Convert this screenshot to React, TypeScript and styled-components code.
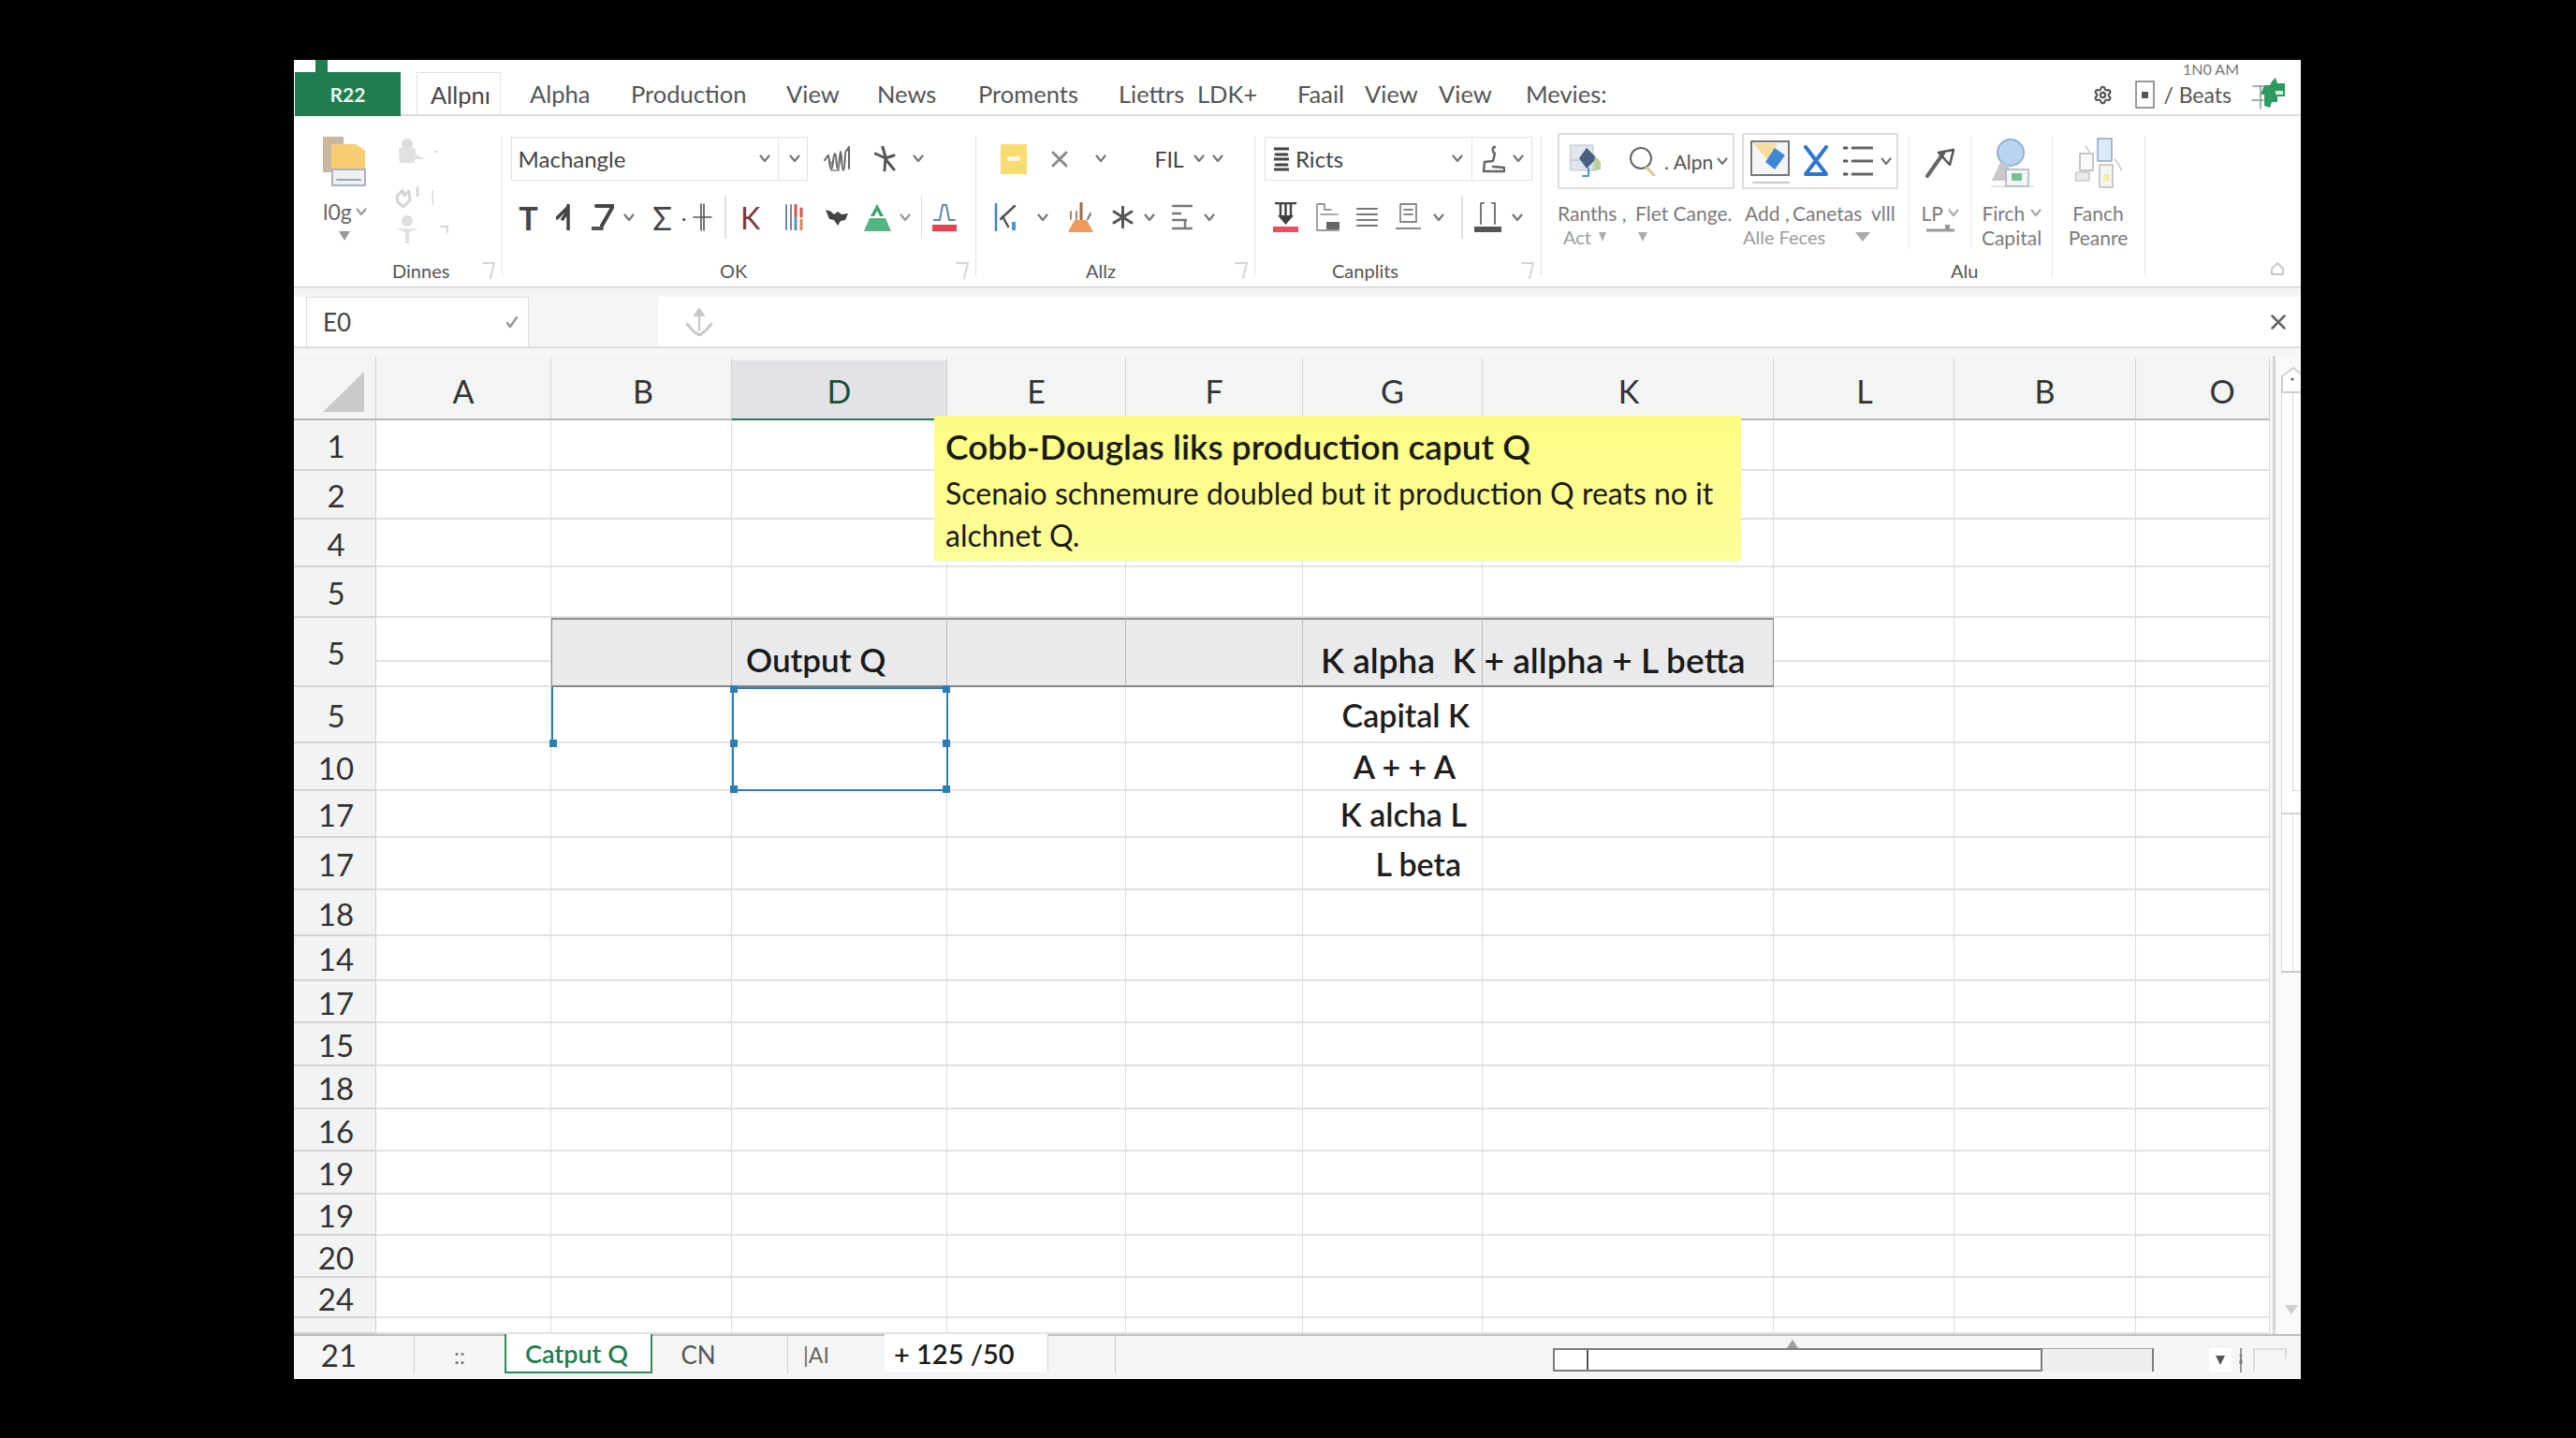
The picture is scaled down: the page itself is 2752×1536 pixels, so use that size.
import React from 'react'
import styled, { createGlobalStyle } from 'styled-components'
import { Settings } from 'lucide-react'

const GlobalStyle = createGlobalStyle`
  html, body { margin: 0; padding: 0; background: #000; }
  body { font-family: Lato, "Open Sans", "Liberation Sans", sans-serif; color: #333; }
`

const Page = styled.div`
  width: 2752px;
  height: 1536px;
  box-sizing: border-box;
  padding: 64px 294px 63px 314px;
  background: #000;
`

const Window = styled.div`
  height: 100%;
  display: flex;
  flex-direction: column;
  background: #fff;
  overflow: hidden;
`

/* ---------- top tab bar ---------- */

const TopBar = styled.div`
  flex: none;
  height: 60px;
  box-sizing: border-box;
  display: flex;
  align-items: flex-end;
  border-bottom: 2px solid #dcdcdc;
`

const FileTab = styled.div`
  position: relative;
  flex: none;
  width: 113px;
  height: 47px;
  margin-left: 1px;
  margin-bottom: -2px;
  display: flex;
  align-items: center;
  justify-content: center;
  background: #1f7d4f;
  color: #e8f3ec;
  font-size: 21px;
  font-weight: 700;

  &::before {
    content: '';
    position: absolute;
    left: 22px;
    top: -13px;
    width: 13px;
    height: 13px;
    background: #1f7d4f;
  }
`

const ActiveTab = styled.div`
  flex: none;
  width: 90px;
  height: 47px;
  box-sizing: border-box;
  margin-left: 17px;
  margin-right: 31px;
  margin-bottom: -2px;
  padding-left: 14px;
  display: flex;
  align-items: center;
  border: 1px solid #e2e2e2;
  border-bottom: 0;
  color: #444;
  font-size: 25.5px;
  overflow: hidden;
`

const Tab = styled.div<{ $w: number }>`
  flex: none;
  width: ${(p) => p.$w}px;
  height: 45px;
  display: flex;
  align-items: center;
  color: #555;
  font-size: 25.5px;
  white-space: nowrap;
`

const TopRight = styled.div`
  margin-left: auto;
  align-self: stretch;
  display: flex;
  flex-direction: column;
  align-items: flex-end;
`

const Clock = styled.div`
  height: 20px;
  line-height: 20px;
  margin-right: 66px;
  font-size: 16px;
  color: #777;
`

const TopActions = styled.div`
  height: 34px;
  display: flex;
  align-items: center;
  padding-right: 16px;
  color: #555;
  font-size: 24px;
`

/* ---------- ribbon ---------- */

const Ribbon = styled.div`
  flex: none;
  height: 183px;
  box-sizing: border-box;
  padding: 21px 0 11px;
  display: flex;
  border-bottom: 1px solid #c9c9c9;
`

const Group = styled.div<{ $w: number; $clear?: boolean }>`
  flex: none;
  width: ${(p) => p.$w}px;
  box-sizing: border-box;
  display: flex;
  flex-direction: column;
  border-right: ${(p) => (p.$clear ? '0' : '1.5px solid #e4e4e4')};
`

const ClipRow = styled.div`
  flex: none;
  height: 122px;
  display: flex;
`

const PasteColumn = styled.div`
  flex: none;
  width: 107px;
  box-sizing: border-box;
  padding-left: 31px;
  display: flex;
  flex-direction: column;
  align-items: flex-start;
`

const PasteLabel = styled.div`
  margin: 14px 0 0 0;
  height: 26px;
  display: flex;
  align-items: center;
  gap: 4px;
  color: #666;
  font-size: 23px;
`

const PasteDrop = styled.div`
  margin: 8px 0 0 17px;
  display: flex;
`

const FadedColumn = styled.div`
  flex: none;
  display: flex;
  flex-direction: column;
  align-items: flex-start;
`

const FadedSlot = styled.div<{ $mt: number }>`
  flex: none;
  display: flex;
  margin-top: ${(p) => p.$mt}px;
`

const ToolRow = styled.div<{ $mt: number; $h: number }>`
  flex: none;
  height: ${(p) => p.$h}px;
  margin-top: ${(p) => p.$mt}px;
  display: flex;
  align-items: center;
`

const Tool = styled.span<{ $x?: number; $w?: number; $c?: string; $fs?: number; $b?: boolean }>`
  flex: none;
  display: inline-flex;
  align-items: center;
  justify-content: center;
  margin-left: ${(p) => p.$x ?? 0}px;
  width: ${(p) => (p.$w ? `${p.$w}px` : 'auto')};
  color: ${(p) => p.$c ?? '#444'};
  font-size: ${(p) => p.$fs ?? 24}px;
  font-weight: ${(p) => (p.$b ? 700 : 400)};
  white-space: nowrap;
`

const ToolSep = styled.span<{ $x: number }>`
  flex: none;
  width: 1.5px;
  height: 46px;
  margin-left: ${(p) => p.$x}px;
  background: #dedede;
`

const Combo = styled.div<{ $x: number; $w: number }>`
  flex: none;
  width: ${(p) => p.$w}px;
  height: 47px;
  margin-left: ${(p) => p.$x}px;
  box-sizing: border-box;
  display: flex;
  align-items: center;
  border: 1.5px solid #dfdfdf;
  color: #444;
  font-size: 24px;
`

const ComboPart = styled.div<{ $w: number }>`
  flex: none;
  width: ${(p) => p.$w}px;
  height: 100%;
  display: flex;
  align-items: center;
  border-right: 1.5px solid #e4e4e4;
`

const CaptionRow = styled.div`
  margin-top: auto;
  height: 12px;
  line-height: 12px;
  display: flex;
  align-items: center;
`

const Caption = styled.span<{ $x: number }>`
  margin-left: ${(p) => p.$x}px;
  color: #555;
  font-size: 20px;
`

const Launcher = styled.span`
  margin-left: auto;
  margin-right: 7px;
  display: inline-flex;
`

const BigRow = styled.div`
  flex: none;
  height: 122px;
  display: flex;
`

const BoxColumn = styled.div<{ $w: number }>`
  flex: none;
  width: ${(p) => p.$w}px;
  box-sizing: border-box;
  padding-left: 17px;
  border-right: 1.5px solid #e8e8e8;
`

const BoxRow = styled.div`
  display: flex;
  gap: 8px;
  margin-top: -3px;
`

const Box = styled.div<{ $w: number }>`
  flex: none;
  width: ${(p) => p.$w}px;
  height: 60px;
  box-sizing: border-box;
  display: flex;
  align-items: center;
  border: 2px solid #dcdcdc;
  border-radius: 2px;
`

const LabelLine = styled.div<{ $mt?: number }>`
  height: 26px;
  margin-top: ${(p) => p.$mt ?? 0}px;
  display: flex;
  align-items: center;
  color: #7b7b7b;
  font-size: 21px;
  white-space: nowrap;
`

const LabelText = styled.span<{ $w?: number; $x?: number; $soft?: boolean }>`
  flex: none;
  width: ${(p) => (p.$w ? `${p.$w}px` : 'auto')};
  margin-left: ${(p) => p.$x ?? 0}px;
  color: ${(p) => (p.$soft ? '#9b9b9b' : '#7b7b7b')};
  font-size: ${(p) => (p.$soft ? 20 : 21)}px;
`

const BigColumn = styled.div<{ $w: number; $clear?: boolean }>`
  flex: none;
  width: ${(p) => p.$w}px;
  box-sizing: border-box;
  display: flex;
  flex-direction: column;
  align-items: center;
  border-right: ${(p) => (p.$clear ? '0' : '1.5px solid #e8e8e8')};
`

const BigIcon = styled.div`
  height: 57px;
  display: flex;
  align-items: center;
  justify-content: center;
`

const Collapse = styled.div`
  flex: 1;
  display: flex;
  align-items: flex-end;
  justify-content: flex-end;
  padding: 0 17px 0 0;
`

/* ---------- formula bar ---------- */

const FormulaGap = styled.div`
  flex: none;
  height: 10px;
  background: linear-gradient(#f0f0f0, #f7f7f7);
`

const FormulaBar = styled.div`
  flex: none;
  height: 55px;
  box-sizing: border-box;
  padding-left: 13px;
  display: flex;
  align-items: stretch;
  border-bottom: 2px solid #dcdcdc;
`

const NameBox = styled.div`
  flex: none;
  width: 238px;
  box-sizing: border-box;
  padding: 0 10px 0 17px;
  display: flex;
  align-items: center;
  justify-content: space-between;
  border: 1.5px solid #dcdcdc;
  border-bottom-width: 0;
  color: #444;
  font-size: 26px;
`

const FormulaFill = styled.div`
  flex: none;
  width: 138px;
  background: #f5f5f5;
`

const FormulaIcon = styled.div`
  flex: none;
  margin-left: 30px;
  display: flex;
  align-items: center;
`

const FormulaClose = styled.div`
  margin-left: auto;
  padding-right: 16px;
  display: flex;
  align-items: center;
`

/* ---------- sheet ---------- */

const SheetArea = styled.div`
  flex: none;
  height: 1053px;
  box-sizing: border-box;
  padding-top: 8px;
  display: flex;
  background: #f6f6f6;
`

const SheetWrap = styled.div`
  position: relative;
  flex: none;
  width: 2111px;
`

const Grid = styled.div<{ $rows: string }>`
  display: grid;
  grid-template-columns: 88px 187px 193px 230px 191px 189px 192px 311px 193px 194px 143px;
  grid-template-rows: ${(p) => p.$rows};
  background: #fff;
`

const Corner = styled.div`
  display: flex;
  align-items: flex-end;
  justify-content: flex-end;
  padding: 0 12px 7px 0;
  background: #f3f4f4;
  border-right: 1px solid #d2d2d2;
  border-bottom: 2px solid #b8b8b8;
`

const ColHead = styled.div<{ $on?: boolean; $nudge?: number }>`
  display: flex;
  align-items: center;
  justify-content: center;
  box-sizing: border-box;
  padding: 3px 0 0 ${(p) => p.$nudge ?? 0}px;
  font-size: 34px;
  background: ${(p) => (p.$on ? '#e1e3e6' : '#f3f4f4')};
  border-top: 5px solid #f3f4f4;
  border-right: 1px solid #d2d2d2;
  border-bottom: ${(p) => (p.$on ? '2px solid #1f7d4f' : '2px solid #b8b8b8')};
  color: ${(p) => (p.$on ? '#1c4f38' : '#333')};
`

const RowHead = styled.div<{ $span?: boolean }>`
  grid-row: ${(p) => (p.$span ? 'span 2' : 'auto')};
  display: flex;
  align-items: center;
  justify-content: center;
  box-sizing: border-box;
  padding: 2px 0 0 3px;
  overflow: hidden;
  font-size: 33px;
  color: #333;
  background: #f2f3f3;
  border-right: 1.5px solid #cfcfcf;
  border-bottom: 2px solid #d4d4d4;
`

const Cell = styled.div<{ $pad?: number }>`
  display: flex;
  align-items: center;
  justify-content: flex-end;
  box-sizing: border-box;
  min-width: 0;
  padding-right: ${(p) => p.$pad ?? 0}px;
  border-right: 1px solid #dcdcdc;
  border-bottom: 2px solid #e2e2e2;
  font-size: 34px;
  font-weight: 600;
  color: #1e1e1e;
  white-space: nowrap;
`

const BandCell = styled.div<{ $first?: boolean; $last?: boolean; $left?: number; $over?: boolean }>`
  grid-row: span 2;
  position: ${(p) => (p.$over ? 'relative' : 'static')};
  z-index: ${(p) => (p.$over ? 1 : 'auto')};
  display: flex;
  align-items: center;
  box-sizing: border-box;
  min-width: 0;
  padding-left: ${(p) => p.$left ?? 0}px;
  padding-top: 14px;
  background: #e9eaeb;
  border-top: 2px solid #8e8e8e;
  border-bottom: 2px solid #858585;
  border-left: ${(p) => (p.$first ? '1.5px solid #8e8e8e' : '0')};
  border-right: ${(p) => (p.$last ? '1.5px solid #8e8e8e' : '1px solid #bdbdbd')};
  font-size: ${(p) => (p.$over ? 37 : 35)}px;
  font-weight: 600;
  color: #1a1a1a;
  white-space: nowrap;
`

const Note = styled.div`
  position: absolute;
  left: 684px;
  top: 64px;
  width: 862px;
  height: 155px;
  box-sizing: border-box;
  padding: 13px 12px 0;
  background: linear-gradient(#fdfd84, #fdfd9a);
  color: #1a1a10;
`

const NoteTitle = styled.div`
  height: 40px;
  line-height: 40px;
  font-size: 37px;
  font-weight: 600;
  white-space: nowrap;
`

const NoteBody = styled.div`
  margin-top: 7px;
  font-size: 32px;
  line-height: 45px;
  white-space: nowrap;
`

const Selection = styled.div<{ $l: number; $w: number; $h: number; $open?: boolean }>`
  position: absolute;
  left: ${(p) => p.$l}px;
  top: 354px;
  width: ${(p) => p.$w}px;
  height: ${(p) => p.$h}px;
  box-sizing: border-box;
  border: ${(p) => (p.$open ? '0' : '2px solid #2d7db5')};
  border-left: 2px solid #2d7db5;
`

const Handle = styled.span<{ $x: number; $y: number }>`
  position: absolute;
  left: ${(p) => p.$x}%;
  top: ${(p) => p.$y}%;
  width: 8px;
  height: 8px;
  transform: translate(-50%, -50%);
  background: #2d7db5;
`

const VScroll = styled.div`
  flex: 1;
  display: flex;
  flex-direction: column;
  padding: 12px 0 0 6px;
  border-left: 3px solid #d6d6d6;
  margin-left: 3px;
  background: #f9f9f9;
`

const ScrollCap = styled.div`
  flex: none;
  height: 28px;
  display: flex;
`

const ScrollThumb = styled.div`
  flex: none;
  height: 450px;
  box-sizing: border-box;
  border-left: 1.5px solid #d6d6d6;
  border-bottom: 2px solid #d4d4d4;
  padding-left: 11px;
  background: #fff;
`

const ScrollInner = styled.div`
  height: 425px;
  box-sizing: border-box;
  border-left: 1.5px solid #d6d6d6;
  border-bottom: 1.5px solid #d6d6d6;
`

const ScrollLower = styled.div`
  flex: none;
  height: 169px;
  box-sizing: border-box;
  padding-left: 11px;
  border-left: 1.5px solid #d6d6d6;
  border-bottom: 2px solid #c8c8c8;
  background: #fff;
`

const ScrollRail = styled.div`
  height: 100%;
  border-left: 1.5px solid #dcdcdc;
`

const ScrollEnd = styled.div`
  margin-top: 355px;
  padding-left: 4px;
  display: flex;
`

/* ---------- bottom sheet tabs ---------- */

const SheetBar = styled.div`
  flex: 1;
  display: flex;
  align-items: flex-start;
  box-sizing: border-box;
  border-top: 2px solid #bdbdbd;
  background: #f5f5f5;
  color: #555;
`

const BarItem = styled.div<{ $x?: number; $w: number; $sep?: boolean; $end?: number }>`
  flex: none;
  width: ${(p) => p.$w}px;
  height: 40px;
  box-sizing: border-box;
  padding-right: ${(p) => p.$end ?? 0}px;
  margin-left: ${(p) => p.$x ?? 0}px;
  display: flex;
  align-items: center;
  justify-content: center;
  font-size: 26px;
  border-right: ${(p) => (p.$sep ? '1.5px solid #cfcfcf' : '0')};
`

const SheetTabOn = styled.div`
  flex: none;
  width: 158px;
  height: 42px;
  box-sizing: border-box;
  display: flex;
  align-items: center;
  justify-content: center;
  padding-right: 4px;
  background: #fff;
  border: 2px solid #2b8a5e;
  border-top: 0;
  color: #1f7d4f;
  font-size: 27px;
  font-weight: 600;
  margin-top: -2px;
`

const AddTab = styled.div`
  flex: none;
  width: 175px;
  height: 40px;
  margin-top: -2px;
  margin-left: 53px;
  box-sizing: border-box;
  padding-left: 10px;
  display: flex;
  align-items: center;
  background: #fff;
  border-right: 1.5px solid #d6d6d6;
  color: #1c1c1c;
  font-size: 29px;
  font-weight: 600;
`

const HScroll = styled.div`
  position: relative;
  flex: none;
  width: 523px;
  height: 25px;
  margin: 13px 0 0 467px;
  box-sizing: border-box;
  display: flex;
  border: 2px solid #7d7d7d;
  background: #fff;
`

const HScrollCap = styled.div`
  width: 34px;
  border-right: 2px solid #555;
`

const HCaret = styled.span`
  position: absolute;
  left: 248px;
  top: -11px;
  width: 0;
  height: 0;
  border-left: 6px solid transparent;
  border-right: 6px solid transparent;
  border-bottom: 9px solid #9d9d9d;
`

const HTrack = styled.div`
  flex: none;
  width: 119px;
  height: 25px;
  margin-top: 13px;
  box-sizing: border-box;
  background: #eeeeee;
  border-top: 1.5px solid #a8a8a8;
  border-right: 2px solid #7f7f7f;
`

const DropBtn = styled.div`
  flex: none;
  width: 24px;
  height: 25px;
  margin: 13px 0 0 59px;
  display: flex;
  align-items: center;
  justify-content: center;
  background: #fff;
`

const Tail = styled.div`
  flex: none;
  margin: 13px 0 0 8px;
  display: flex;
`

/* ---------- icons ---------- */

const Ico: React.FC<{ w: number; h: number; children: React.ReactNode }> = ({ w, h, children }) => (
  <svg width={w} height={h} viewBox={`0 0 ${w} ${h}`} fill='none' strokeLinecap='round' strokeLinejoin='round'>
    {children}
  </svg>
)

const Chev: React.FC<{ c?: string }> = ({ c = '#777' }) => (
  <Ico w={12} h={9}>
    <path d='M1.5 1.5 6 7l4.5-5.5' stroke={c} strokeWidth='2.2' />
  </Ico>
)

const Tri: React.FC<{ c?: string; w?: number }> = ({ c = '#999', w = 12 }) => (
  <Ico w={w} h={10}>
    <path d={`M0 0h${w}L${w / 2} 10z`} fill={c} />
  </Ico>
)

const PasteIcon = () => (
  <Ico w={46} h={54}>
    <path d='M0 1h22v38H0z' fill='#c9b7a0' />
    <path d='M9 9h26l10 7v21H9z' fill='#f7cd72' />
    <path d='M10 36h35v17H10z' fill='#eef0f3' stroke='#a9b2bd' strokeWidth='2' />
    <path d='M15 47h25' stroke='#9aa4af' strokeWidth='2' />
  </Ico>
)

const Faded1 = () => (
  <Ico w={48} h={26}>
    <circle cx='14' cy='6' r='6' fill='#dcdcdc' />
    <path d='M5 10h17l2 8 10 4-11 0-2 4H6z' fill='#e0e0e0' />
    <circle cx='45' cy='14' r='1.5' fill='#d8d8d8' />
  </Ico>
)

const Faded2 = () => (
  <Ico w={42} h={24}>
    <path d='M3 12 9 5l2 6 5-5 1 10-7 7-6-5z' stroke='#d6d6d6' strokeWidth='3' />
    <path d='M25 2v9M42 6v14' stroke='#d2d2d2' strokeWidth='2.5' />
  </Ico>
)

const Faded3 = () => (
  <Ico w={62} h={30}>
    <circle cx='14' cy='6' r='6' fill='#dedede' />
    <path d='M2 14h24l-10 4v12h-4V18z' fill='#e0e0e0' />
    <path d='M50 12h7M57 12v6' stroke='#d6d6d6' strokeWidth='2' />
  </Ico>
)

const ChartIcon = () => (
  <Ico w={31} h={27}>
    <path d='M1 15c2-2 3-5 4-5s1 15 3 15 2-17 4-17 1 16 3 16 2-18 3-18 1 20 3 20 1-20 3-21 2-3 3-4v23' stroke='#666' strokeWidth='2' />
    <path d='M8 17v9h8v-9' stroke='#888' strokeWidth='1.5' />
  </Ico>
)

const RunnerIcon = () => (
  <Ico w={23} h={28}>
    <path d='M9 1l3 11-1 14M1 8l11 5 9-3M12 14l9 11' stroke='#555' strokeWidth='3' />
  </Ico>
)

const FlagIcon = () => (
  <Ico w={16} h={28}>
    <path d='M13 1v26M13 3 1 15M13 7l-6 9' stroke='#444' strokeWidth='3.5' />
  </Ico>
)

const SlantIcon = () => (
  <Ico w={24} h={28}>
    <path d='M5 2h18l-12 21' stroke='#444' strokeWidth='4' />
    <path d='M1 26h10' stroke='#555' strokeWidth='4' />
  </Ico>
)

const PlusIcon = () => (
  <Ico w={21} h={30}>
    <path d='M9 1v28M12 1v28M1 15h19' stroke='#555' strokeWidth='1.6' />
  </Ico>
)

const BarsIcon = () => (
  <Ico w={21} h={28}>
    <path d='M2 1v26M7 1v26' stroke='#6f86a6' strokeWidth='2' />
    <path d='M12 1v12' stroke='#d9534f' strokeWidth='3' />
    <path d='M12 15v12' stroke='#5e8fc0' strokeWidth='3' />
    <path d='M18 5v8' stroke='#d9534f' strokeWidth='3' />
    <path d='M18 17v10' stroke='#d98a4f' strokeWidth='3' />
  </Ico>
)

const BatIcon = () => (
  <Ico w={24} h={20}>
    <path d='M0 2l6 2 3 3 4-3 4 3 7-1-3 7-5 1-3 5-4-6-5-1z' fill='#444' />
  </Ico>
)

const FillGreen = () => (
  <Ico w={29} h={30}>
    <path d='M14 1 7 14h4l3-6 3 6h4z' fill='#3aa26b' />
    <path d='M6 16h17l6 14H0z' fill='#53b583' />
  </Ico>
)

const RedUnder = () => (
  <Ico w={26} h={30}>
    <path d='M2 18h6l3-16h4l3 16h6' stroke='#5c83b8' strokeWidth='2' />
    <path d='M0 23h26v7H0z' fill='#e4434f' />
  </Ico>
)

const NoteIcon = () => (
  <Ico w={28} h={32}>
    <path d='M0 0h28v32H0z' fill='#f8dc72' />
    <path d='M7 13h14v5H7z' fill='#fff8dd' />
  </Ico>
)

const CrossIcon = () => (
  <Ico w={18} h={18}>
    <path d='M2 2l14 14M16 2 2 16' stroke='#8a8a8a' strokeWidth='3' />
  </Ico>
)

const BlueK = () => (
  <Ico w={25} h={30}>
    <path d='M2 1v28' stroke='#3f86c9' strokeWidth='2.5' />
    <path d='M7 17 22 3M9 14l6 11' stroke='#555' strokeWidth='2.5' />
    <path d='M19 20h4v9h-4z' fill='#4b96d6' />
  </Ico>
)

const OrangeIcon = () => (
  <Ico w={27} h={32}>
    <path d='M3 10v8M9 10v8' stroke='#9a8a7a' strokeWidth='2' />
    <path d='M14 1v17' stroke='#a06a45' strokeWidth='3' />
    <path d='M24 12l-3 6' stroke='#777' strokeWidth='2' />
    <path d='M7 19h13l7 13H0z' fill='#ef9a5e' />
  </Ico>
)

const StarIcon = () => (
  <Ico w={23} h={24}>
    <path d='M11.5 1v22M2 6l19 12M21 6 2 18' stroke='#555' strokeWidth='3' />
  </Ico>
)

const AlignIcon = () => (
  <Ico w={22} h={28}>
    <path d='M1 2h20M1 10h8M1 17h14M14 17v8M1 26h20' stroke='#777' strokeWidth='2.5' />
  </Ico>
)

const StackIcon = () => (
  <Ico w={16} h={28}>
    <path d='M0 3h16M2 9h12M0 14h16M2 20h12M0 25h16' stroke='#444' strokeWidth='3' />
  </Ico>
)

const JoyIcon = () => (
  <Ico w={26} h={30}>
    <path d='M15 2c-3 0-3 5 0 7l-2 8-9 1-1 10h22v-4l-12-1' stroke='#666' strokeWidth='2.5' />
  </Ico>
)

const DownRed = () => (
  <Ico w={27} h={32}>
    <path d='M8 1v14M13.5 1v14M19 1v14M3 1h21' stroke='#444' strokeWidth='2.5' />
    <path d='M5 14h17l-8.5 10z' fill='#3f3f3f' />
    <path d='M0 26h27v6H0z' fill='#e8505f' />
  </Ico>
)

const FileIcon = () => (
  <Ico w={27} h={30}>
    <path d='M2 1h8v6h7M2 1v28h23' stroke='#999' strokeWidth='1.8' />
    <path d='M6 12h18' stroke='#aaa' strokeWidth='1.8' />
    <path d='M12 20h14v8H12z' fill='#666' />
  </Ico>
)

const LinesIcon = () => (
  <Ico w={23} h={22}>
    <path d='M1 2h21M1 8h21M1 14h21M1 20h21' stroke='#777' strokeWidth='2.2' />
  </Ico>
)

const DocIcon = () => (
  <Ico w={27} h={30}>
    <path d='M5 1h17v19H5z' stroke='#888' strokeWidth='1.8' />
    <path d='M9 7h9M9 12h9' stroke='#888' strokeWidth='1.8' />
    <path d='M0 27h27' stroke='#888' strokeWidth='2.2' />
  </Ico>
)

const BorderIcon = () => (
  <Ico w={29} h={32}>
    <path d='M7 1v22M22 1v22M7 1h3M22 1h-3' stroke='#777' strokeWidth='2' />
    <path d='M0 26h29v6H0z' fill='#555' />
  </Ico>
)

const DiamondIcon = () => (
  <Ico w={34} h={36}>
    <path d='M1 1h24v27H1z' fill='#dfe6ec' stroke='#b9c4cf' />
    <path d='M1 17h24' stroke='#aab6c2' />
    <path d='M18 4l11 11-11 11-8-11z' fill='#4b5f7e' />
    <path d='M27 12l6 7v8l-8 2z' fill='#b9cf9c' />
    <path d='M20 26v8h-6' stroke='#4b96d6' strokeWidth='2' />
  </Ico>
)

const SearchIcon = () => (
  <Ico w={30} h={32}>
    <circle cx='13' cy='13' r='11' stroke='#666' strokeWidth='2' />
    <path d='M19 23l8 8' stroke='#d7c98d' strokeWidth='3' />
  </Ico>
)

const PicIcon = () => (
  <Ico w={42} h={54}>
    <path d='M1 6h40v36H1z' fill='#f3f5f7' stroke='#777' strokeWidth='2' />
    <path d='M3 8h26L18 26z' fill='#f7dc9e' />
    <path d='M26 13l11 8-11 15-10-8z' fill='#3f86d6' />
    <path d='M3 50h38' stroke='#c8c8c8' strokeWidth='2' />
  </Ico>
)

const HourIcon = () => (
  <Ico w={32} h={34}>
    <path d='M5 2 27 31H5L27 2' stroke='#2e77cc' strokeWidth='4' />
  </Ico>
)

const ListIcon = () => (
  <Ico w={32} h={32}>
    <path d='M10 2h22M10 16h22M10 30h22' stroke='#666' strokeWidth='3' />
    <path d='M1 2h3M1 16h3M1 30h3' stroke='#555' strokeWidth='3' />
  </Ico>
)

const ArrowIcon = () => (
  <Ico w={32} h={32}>
    <path d='M2 30 19 6' stroke='#666' strokeWidth='4' />
    <path d='M14 5l16-3-4 16z' stroke='#555' strokeWidth='2.5' />
  </Ico>
)

const FichIcon = () => (
  <Ico w={48} h={54}>
    <circle cx='23' cy='16' r='14' fill='#b9d4f0' stroke='#8fb1d6' strokeWidth='2' />
    <path d='M12 26 3 46h15l4-16z' fill='#c9c9c9' />
    <path d='M3 52h44' stroke='#e4e4e4' strokeWidth='2' />
    <path d='M18 34h24v18H18z' fill='#f3f5f6' stroke='#a8b2bb' strokeWidth='1.5' />
    <path d='M24 38h11v8H24z' fill='#73c28f' />
  </Ico>
)

const FanchIcon = () => (
  <Ico w={50} h={56}>
    <path d='M5 18h14v18H5z' fill='#fafafa' stroke='#b5b5b5' strokeWidth='1.5' />
    <path d='M24 2h15v24H24z' fill='#dbe9f6' stroke='#93a8bf' strokeWidth='1.5' />
    <path d='M1 38h14v9H1z' fill='#ececec' stroke='#b5b5b5' />
    <path d='M26 30h14v24H26z' fill='#f5f5f5' stroke='#bbb' strokeWidth='1.5' />
    <path d='M30 40h7v7h-7z' fill='#f4eea8' />
    <path d='M42 24c3 3 6 8 7 12M11 10l4 6' stroke='#c9c9c9' strokeWidth='1.5' />
  </Ico>
)

const SmallBar = () => (
  <Ico w={30} h={10}>
    <path d='M0 6h30' stroke='#999' strokeWidth='3' />
    <path d='M20 0h5v5h-5z' fill='#999' />
  </Ico>
)

const Corner3 = () => (
  <Ico w={14} h={18}>
    <path d='M1 1h12L9 17' stroke='#d4d4d4' strokeWidth='2' />
  </Ico>
)

const PuzzleIcon = () => (
  <Ico w={37} h={36}>
    <path d='M14 8h6l2-4 4-4 2 6h8v14h-8v6h-6l-2 6-6-2V18h-4z' fill='#2f9a5f' />
    <path d='M10 9v24M1 24h12M2 9h12' stroke='#7c9c8a' strokeWidth='1.5' />
    <path d='M26 14h8v4h-8z' fill='#e0f0e6' />
  </Ico>
)

const WinIcon = () => (
  <Ico w={21} h={30}>
    <path d='M1 1h19v28H1z' stroke='#777' strokeWidth='1.5' />
    <path d='M7 12h7v7H7z' fill='#555' />
  </Ico>
)

const AnchorIcon = () => (
  <Ico w={28} h={30}>
    <path d='M14 1l-5 7h10zM14 8v16' fill='#c8c8c8' stroke='#c8c8c8' strokeWidth='2' />
    <path d='M1 17l6 7M27 17l-6 7M8 25l6 4 6-4' stroke='#c8c8c8' strokeWidth='3' />
  </Ico>
)

const CheckIcon = () => (
  <Ico w={14} h={14}>
    <path d='M2 8l3 4 7-10' stroke='#999' strokeWidth='2.5' />
  </Ico>
)

const CloseIcon = () => (
  <Ico w={16} h={16}>
    <path d='M1.5 1.5l13 13M14.5 1.5l-13 13' stroke='#666' strokeWidth='2.5' />
  </Ico>
)

const CornerMark = () => (
  <Ico w={44} h={43}>
    <path d='M44 0v43H0z' fill='#c9cacb' />
  </Ico>
)

const CapIcon = () => (
  <Ico w={26} h={28}>
    <path d='M1 27V10L13 1l12 9v17z' fill='#fff' stroke='#cfcfcf' strokeWidth='2' />
    <circle cx='12' cy='13' r='1.5' fill='#555' />
  </Ico>
)

const TailIcon = () => (
  <Ico w={52} h={26}>
    <path d='M2 0v26M1 8h2M2 10l-1 6h2z' stroke='#777' strokeWidth='1.5' />
    <path d='M16 24V1h34v10' stroke='#d4d4d4' strokeWidth='1.5' />
  </Ico>
)

/* ---------- data ---------- */

const columns: [string, number][] = [
  ['A', 0],
  ['B', 4],
  ['D', 0],
  ['E', 0],
  ['F', 0],
  ['G', 0],
  ['K', 2],
  ['L', 2],
  ['B', 0],
  ['O', 42],
]

const rows: { label: string; h: number }[] = [
  { label: '1', h: 54 },
  { label: '2', h: 52 },
  { label: '4', h: 51 },
  { label: '5', h: 54 },
  { label: '5', h: 60 },
  { label: '10', h: 51 },
  { label: '17', h: 50 },
  { label: '17', h: 56 },
  { label: '18', h: 49 },
  { label: '14', h: 48 },
  { label: '17', h: 45 },
  { label: '15', h: 46 },
  { label: '18', h: 46 },
  { label: '16', h: 45 },
  { label: '19', h: 46 },
  { label: '19', h: 44 },
  { label: '20', h: 45 },
  { label: '24', h: 43 },
  { label: '', h: 17 },
]

const gridRows = [
  69,
  ...rows.slice(0, 4).map((r) => r.h),
  47,
  27,
  ...rows.slice(4).map((r) => r.h),
]
  .map((h) => `${h}px`)
  .join(' ')

// right aligned text in column G, keyed by index into the rows below the band
const variables: Record<number, { text: string; pad: number }> = {
  0: { text: 'Capital K', pad: 13 },
  1: { text: 'A + + A', pad: 28 },
  2: { text: 'K alcha L', pad: 16 },
  3: { text: 'L beta', pad: 22 },
}

const tabs: [string, number][] = [
  ['Alpha', 108],
  ['Production', 166],
  ['View', 97],
  ['News', 108],
  ['Proments', 150],
  ['Liettrs', 84],
  ['LDK+', 107],
  ['Faail', 72],
  ['View', 79],
  ['View', 93],
  ['Mevies:', 100],
]

const Sheet: React.FC = () => (
  <Grid $rows={gridRows}>
    <Corner>
      <CornerMark />
    </Corner>
    {columns.map(([c, nudge], i) => (
      <ColHead key={i} $on={i === 2} $nudge={nudge}>
        {c}
      </ColHead>
    ))}
    {rows.slice(0, 4).map((r, i) => (
      <React.Fragment key={i}>
        <RowHead>{r.label}</RowHead>
        {columns.map((_, j) => (
          <Cell key={j} />
        ))}
      </React.Fragment>
    ))}
    <RowHead $span>5</RowHead>
    <Cell />
    <BandCell $first />
    <BandCell $left={15}>Output Q</BandCell>
    <BandCell />
    <BandCell />
    <BandCell $left={19} $over>
      K alpha&nbsp; K + allpha + L betta
    </BandCell>
    <BandCell $last />
    <Cell />
    <Cell />
    <Cell />
    <Cell />
    <Cell />
    <Cell />
    <Cell />
    {rows.slice(4).map((r, i) => (
      <React.Fragment key={i}>
        <RowHead>{r.label}</RowHead>
        {columns.map((_, j) =>
          j === 5 && variables[i] ? (
            <Cell key={j} $pad={variables[i].pad}>
              {variables[i].text}
            </Cell>
          ) : (
            <Cell key={j} />
          ),
        )}
      </React.Fragment>
    ))}
  </Grid>
)

const App: React.FC = () => (
  <Page>
    <GlobalStyle />
    <Window>
      <TopBar>
        <FileTab>R22</FileTab>
        <ActiveTab>Allpnı</ActiveTab>
        {tabs.map(([name, w], i) => (
          <Tab key={i} $w={w}>
            {name}
          </Tab>
        ))}
        <TopRight>
          <Clock>1N0 AM</Clock>
          <TopActions>
            <Settings size={21} strokeWidth={2.4} color='#555' />
            <Tool $x={24}>
              <WinIcon />
            </Tool>
            <Tool $x={9} $c='#555' $fs={23}>
              / Beats
            </Tool>
            <Tool $x={21}>
              <PuzzleIcon />
            </Tool>
          </TopActions>
        </TopRight>
      </TopBar>

      <Ribbon>
        <Group $w={223}>
          <ClipRow>
            <PasteColumn>
              <PasteIcon />
              <PasteLabel>
                l0g
                <Chev c='#999' />
              </PasteLabel>
              <PasteDrop>
                <Tri />
              </PasteDrop>
            </PasteColumn>
            <FadedColumn>
              <FadedSlot $mt={3}>
                <Faded1 />
              </FadedSlot>
              <FadedSlot $mt={24}>
                <Faded2 />
              </FadedSlot>
              <FadedSlot $mt={8}>
                <Faded3 />
              </FadedSlot>
            </FadedColumn>
          </ClipRow>
          <CaptionRow>
            <Caption $x={105}>Dinnes</Caption>
            <Launcher>
              <Corner3 />
            </Launcher>
          </CaptionRow>
        </Group>

        <Group $w={506}>
          <ToolRow $mt={1} $h={47}>
            <Combo $x={9} $w={317}>
              <ComboPart $w={284}>
                <Tool $x={8} $w={112}>
                  Machangle
                </Tool>
                <Tool $x={144} $w={12}>
                  <Chev />
                </Tool>
              </ComboPart>
              <Tool $x={11} $w={12}>
                <Chev />
              </Tool>
            </Combo>
            <Tool $x={17}>
              <ChartIcon />
            </Tool>
            <Tool $x={23}>
              <RunnerIcon />
            </Tool>
            <Tool $x={18}>
              <Chev />
            </Tool>
          </ToolRow>
          <ToolRow $mt={16} $h={46}>
            <Tool $x={18} $w={19} $fs={34} $b>
              T
            </Tool>
            <Tool $x={20} $w={16}>
              <FlagIcon />
            </Tool>
            <Tool $x={22} $w={24}>
              <SlantIcon />
            </Tool>
            <Tool $x={10} $w={12}>
              <Chev />
            </Tool>
            <Tool $x={18} $w={23} $fs={34}>
              Σ
            </Tool>
            <Tool $x={10} $w={3} $fs={20}>
              ·
            </Tool>
            <Tool $x={8} $w={21}>
              <PlusIcon />
            </Tool>
            <ToolSep $x={13} />
            <Tool $x={15} $w={22} $fs={32} $c='#7d3b3b'>
              K
            </Tool>
            <Tool $x={25} $w={21}>
              <BarsIcon />
            </Tool>
            <Tool $x={23} $w={24}>
              <BatIcon />
            </Tool>
            <Tool $x={17} $w={29}>
              <FillGreen />
            </Tool>
            <Tool $x={9} $w={12}>
              <Chev c='#999' />
            </Tool>
            <ToolSep $x={11} />
            <Tool $x={11} $w={26}>
              <RedUnder />
            </Tool>
          </ToolRow>
          <CaptionRow>
            <Caption $x={232}>OK</Caption>
            <Launcher>
              <Corner3 />
            </Launcher>
          </CaptionRow>
        </Group>

        <Group $w={298}>
          <ToolRow $mt={1} $h={47}>
            <Tool $x={26} $w={28}>
              <NoteIcon />
            </Tool>
            <Tool $x={26} $w={18}>
              <CrossIcon />
            </Tool>
            <Tool $x={29} $w={12}>
              <Chev />
            </Tool>
            <Tool $x={53} $w={28} $fs={23}>
              FIL
            </Tool>
            <Tool $x={12} $w={12}>
              <Chev />
            </Tool>
            <Tool $x={8} $w={12}>
              <Chev />
            </Tool>
          </ToolRow>
          <ToolRow $mt={16} $h={46}>
            <Tool $x={19} $w={25}>
              <BlueK />
            </Tool>
            <Tool $x={21} $w={12}>
              <Chev />
            </Tool>
            <Tool $x={21} $w={27}>
              <OrangeIcon />
            </Tool>
            <Tool $x={20} $w={23}>
              <StarIcon />
            </Tool>
            <Tool $x={11} $w={12}>
              <Chev />
            </Tool>
            <Tool $x={18} $w={22}>
              <AlignIcon />
            </Tool>
            <Tool $x={12} $w={12}>
              <Chev />
            </Tool>
          </ToolRow>
          <CaptionRow>
            <Caption $x={117}>Allz</Caption>
            <Launcher>
              <Corner3 />
            </Launcher>
          </CaptionRow>
        </Group>

        <Group $w={306}>
          <ToolRow $mt={1} $h={47}>
            <Combo $x={10} $w={286}>
              <ComboPart $w={220}>
                <Tool $x={9} $w={16}>
                  <StackIcon />
                </Tool>
                <Tool $x={7}>Ricts</Tool>
                <Tool $x={116} $w={12}>
                  <Chev />
                </Tool>
              </ComboPart>
              <Tool $x={9} $w={26}>
                <JoyIcon />
              </Tool>
              <Tool $x={8} $w={12}>
                <Chev />
              </Tool>
            </Combo>
          </ToolRow>
          <ToolRow $mt={16} $h={46}>
            <Tool $x={19} $w={27}>
              <DownRed />
            </Tool>
            <Tool $x={18} $w={27}>
              <FileIcon />
            </Tool>
            <Tool $x={17} $w={23}>
              <LinesIcon />
            </Tool>
            <Tool $x={19} $w={27}>
              <DocIcon />
            </Tool>
            <Tool $x={13} $w={12}>
              <Chev />
            </Tool>
            <ToolSep $x={18} />
            <Tool $x={12} $w={29}>
              <BorderIcon />
            </Tool>
            <Tool $x={11} $w={12}>
              <Chev />
            </Tool>
          </ToolRow>
          <CaptionRow>
            <Caption $x={82}>Canplits</Caption>
            <Launcher>
              <Corner3 />
            </Launcher>
          </CaptionRow>
        </Group>

        <Group $w={546}>
          <BigRow>
            <BoxColumn $w={393}>
              <BoxRow>
                <Box $w={189}>
                  <Tool $x={11}>
                    <DiamondIcon />
                  </Tool>
                  <Tool $x={29}>
                    <SearchIcon />
                  </Tool>
                  <Tool $x={8} $fs={21} $c='#555'>
                    .&nbsp;Alpn
                  </Tool>
                  <Tool $x={4}>
                    <Chev />
                  </Tool>
                </Box>
                <Box $w={167}>
                  <Tool $x={7}>
                    <PicIcon />
                  </Tool>
                  <Tool $x={12}>
                    <HourIcon />
                  </Tool>
                  <Tool $x={13}>
                    <ListIcon />
                  </Tool>
                  <Tool $x={8}>
                    <Chev />
                  </Tool>
                </Box>
              </BoxRow>
              <LabelLine $mt={12}>
                <LabelText $w={83}>Ranths ,</LabelText>
                <LabelText $w={117}>Flet Cange.</LabelText>
                <LabelText $w={51}>Add ,</LabelText>
                <LabelText $w={84}>Canetas</LabelText>
                <LabelText>vlll</LabelText>
              </LabelLine>
              <LabelLine>
                <LabelText $x={6} $w={38} $soft>
                  Act
                </LabelText>
                <Tri c='#aaa' w={8} />
                <Tool $x={34}>
                  <Tri c='#aaa' w={10} />
                </Tool>
                <LabelText $x={102} $soft>
                  Alle Feces
                </LabelText>
                <Tool $x={32}>
                  <Tri c='#aaa' w={16} />
                </Tool>
              </LabelLine>
            </BoxColumn>
            <BigColumn $w={66}>
              <BigIcon>
                <ArrowIcon />
              </BigIcon>
              <LabelLine $mt={12}>
                LP&nbsp;
                <Chev c='#aaa' />
              </LabelLine>
              <SmallBar />
            </BigColumn>
            <BigColumn $w={87}>
              <BigIcon>
                <FichIcon />
              </BigIcon>
              <LabelLine $mt={12}>
                Firch&nbsp;
                <Chev c='#aaa' />
              </LabelLine>
              <LabelLine>Capital</LabelLine>
            </BigColumn>
          </BigRow>
          <CaptionRow>
            <Caption $x={437}>Alu</Caption>
          </CaptionRow>
        </Group>

        <Group $w={99}>
          <BigColumn $w={97} $clear>
            <BigIcon>
              <FanchIcon />
            </BigIcon>
            <LabelLine $mt={12}>Fanch</LabelLine>
            <LabelLine>Peanre</LabelLine>
          </BigColumn>
        </Group>

        <Collapse>
          <Ico w={16} h={16}>
            <path d='M2 14V8l6-6 6 6v6z' stroke='#c8c8c8' strokeWidth='2' />
          </Ico>
        </Collapse>
      </Ribbon>

      <FormulaGap />

      <FormulaBar>
        <NameBox>
          E0
          <CheckIcon />
        </NameBox>
        <FormulaFill />
        <FormulaIcon>
          <AnchorIcon />
        </FormulaIcon>
        <FormulaClose>
          <CloseIcon />
        </FormulaClose>
      </FormulaBar>

      <SheetArea>
        <SheetWrap>
          <Sheet />
          <Note>
            <NoteTitle>Cobb-Douglas liks production caput Q</NoteTitle>
            <NoteBody>
              Scenaio schnemure doubled but it production Q reats no it
              <br />
              alchnet Q.
            </NoteBody>
          </Note>
          <Selection $l={275} $w={1} $h={60} $open>
            <Handle $x={50} $y={100} />
          </Selection>
          <Selection $l={468} $w={231} $h={111}>
            <Handle $x={0} $y={0} />
            <Handle $x={100} $y={0} />
            <Handle $x={0} $y={54} />
            <Handle $x={100} $y={54} />
            <Handle $x={0} $y={100} />
            <Handle $x={100} $y={100} />
          </Selection>
        </SheetWrap>
        <VScroll>
          <ScrollCap>
            <CapIcon />
          </ScrollCap>
          <ScrollThumb>
            <ScrollInner />
          </ScrollThumb>
          <ScrollLower>
            <ScrollRail />
          </ScrollLower>
          <ScrollEnd>
            <Tri c='#cfcfcf' w={14} />
          </ScrollEnd>
        </VScroll>
      </SheetArea>

      <SheetBar>
        <BarItem $w={129} $sep $end={32}>
          <Tool $fs={33} $c='#333'>
            21
          </Tool>
        </BarItem>
        <BarItem $w={96}>
          <Tool $fs={24} $c='#777'>
            ::
          </Tool>
        </BarItem>
        <SheetTabOn>Catput Q</SheetTabOn>
        <BarItem $w={145} $sep $end={46}>
          CN
        </BarItem>
        <BarItem $x={10} $w={40}>
          <Tool $fs={23} $c='#666'>
            |AI
          </Tool>
        </BarItem>
        <AddTab>+ 125 /50</AddTab>
        <BarItem $w={72} $sep />
        <HScroll>
          <HScrollCap />
          <HCaret />
        </HScroll>
        <HTrack />
        <DropBtn>
          <Tri c='#555' w={10} />
        </DropBtn>
        <Tail>
          <TailIcon />
        </Tail>
      </SheetBar>
    </Window>
  </Page>
)

export default App
